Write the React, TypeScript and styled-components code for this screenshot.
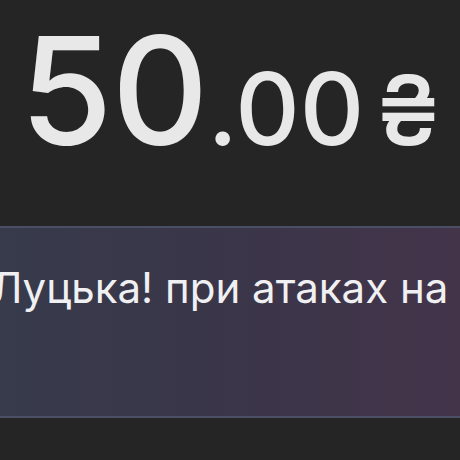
import React from 'react'
import styled, { createGlobalStyle } from 'styled-components'

const GlobalStyle = createGlobalStyle`
html, body {
  margin: 0;
  padding: 0;
  background: #252525;
}
`

const Page = styled.div`
width: 460px;
height: 460px;
overflow: hidden;
background: #252525;
display: flex;
flex-direction: column;
`

const AmountRow = styled.div`
display: flex;
align-items: baseline;
padding: 16px 0 0 20px;
height: 209px;
box-sizing: border-box;
font-family: Inter, "Liberation Sans", sans-serif;
color: #e8e8e8;
line-height: 1;
`

const Major = styled.span`
font-size: 150px;
font-weight: 500;
letter-spacing: -1px;
`

const Minor = styled.span`
font-size: 100px;
font-weight: 500;
`

const Currency = styled.span`
margin-left: 12px;
font-size: 96px;
font-weight: 500;
`

const Banner = styled.div`
margin-top: 17px;
height: 192px;
box-sizing: border-box;
border-top: 2px solid #4a4f66;
border-bottom: 2px solid #4a4f66;
background: linear-gradient(90deg, #373b4c 0%, #3a3649 45%, #43344a 100%);
overflow: hidden;
padding-top: 39px;
`

const Ticker = styled.div`
white-space: nowrap;
font-family: Inter, Roboto, sans-serif;
font-size: 42px;
line-height: 1;
color: #f0f0f2;
margin-left: -9px;
`

const App: React.FC = () => {
  return (
    <Page>
      <GlobalStyle />
      <AmountRow>
        <Major>50</Major>
        <Minor>.00</Minor>
        <Currency>₴</Currency>
      </AmountRow>
      <Banner>
        <Ticker>Луцька! при атаках на місто</Ticker>
      </Banner>
    </Page>
  )
}

export default App
